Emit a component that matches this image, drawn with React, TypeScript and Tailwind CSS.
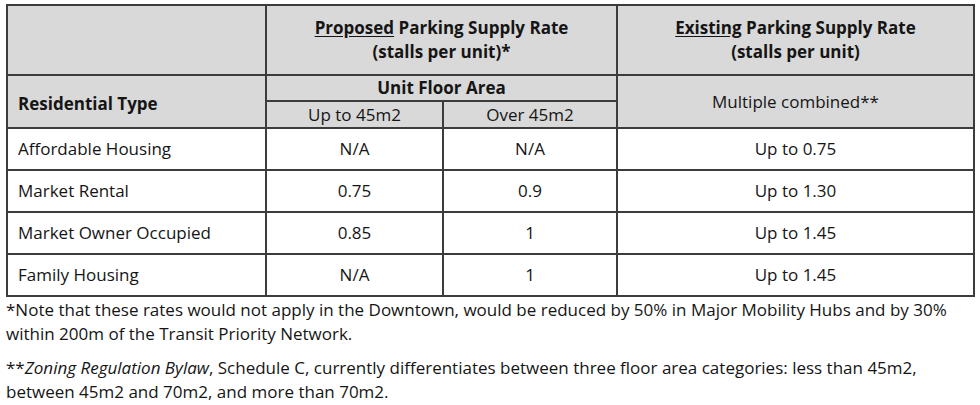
import React from 'react';

const rows = [
  { type: 'Affordable Housing', small: 'N/A', large: 'N/A', existing: 'Up to 0.75' },
  { type: 'Market Rental', small: '0.75', large: '0.9', existing: 'Up to 1.30' },
  { type: 'Market Owner Occupied', small: '0.85', large: '1', existing: 'Up to 1.45' },
  { type: 'Family Housing', small: 'N/A', large: '1', existing: 'Up to 1.45' },
];

const cell = 'border-2 border-[#3c3c3c]';

export default function App() {
  return (
    <div
      className="w-[980px] h-[405px] bg-white text-[#151515] pl-[6px] pr-[5px] pt-[4px]"
      style={{ fontFamily: '"Open Sans", "Liberation Sans", sans-serif' }}
    >
      <table className="w-[969px] border-collapse table-fixed text-[17px] leading-[24px]">
        <colgroup>
          <col className="w-[259px]" />
          <col className="w-[177px]" />
          <col className="w-[174px]" />
          <col />
        </colgroup>
        <thead className="bg-[#d9d9d9]">
          <tr className="h-[70px]">
            <th className={cell}></th>
            <th colSpan={2} className={`${cell} font-bold text-center`}>
              <span className="underline underline-offset-2">Proposed</span> Parking Supply Rate
              <br />
              (stalls per unit)*
            </th>
            <th className={`${cell} font-bold text-center`}>
              <span className="underline underline-offset-2">Existing</span> Parking Supply Rate
              <br />
              (stalls per unit)
            </th>
          </tr>
          <tr className="h-[25px]">
            <th rowSpan={2} className={`${cell} font-bold text-left pl-[10px] pt-[4px]`}>
              Residential Type
            </th>
            <th colSpan={2} className={`${cell} font-bold text-center`}>
              Unit Floor Area
            </th>
            <th rowSpan={2} className={`${cell} font-normal text-center`}>
              Multiple combined**
            </th>
          </tr>
          <tr className="h-[27px]">
            <th className={`${cell} font-normal text-center`}>Up to 45m2</th>
            <th className={`${cell} font-normal text-center`}>Over 45m2</th>
          </tr>
        </thead>
        <tbody>
          {rows.map((r) => (
            <tr key={r.type} className="h-[42px]">
              <td className={`${cell} pl-[10px]`}>{r.type}</td>
              <td className={`${cell} text-center`}>{r.small}</td>
              <td className={`${cell} text-center`}>{r.large}</td>
              <td className={`${cell} text-center`}>{r.existing}</td>
            </tr>
          ))}
        </tbody>
      </table>
      <div className="text-[17px] leading-[24px] mt-[1px] whitespace-nowrap">
        <p>
          *Note that these rates would not apply in the Downtown, would be reduced by 50% in Major Mobility Hubs and by 30%
          <br />
          within 200m of the Transit Priority Network.
        </p>
        <p className="mt-[10px]">
          **<i>Zoning Regulation Bylaw</i>, Schedule C, currently differentiates between three floor area categories: less than 45m2,
          <br />
          between 45m2 and 70m2, and more than 70m2.
        </p>
      </div>
    </div>
  );
}
